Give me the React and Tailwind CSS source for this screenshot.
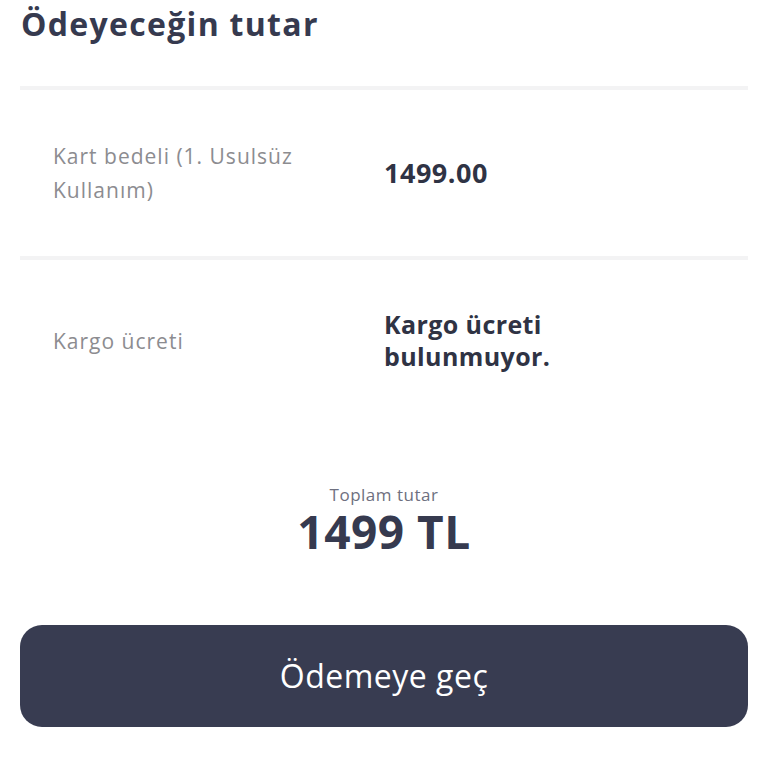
export default function App() {
  return (
    <div className="min-h-screen bg-white px-5 font-['Open_Sans',sans-serif] text-[#363a4f]">
      <h1 className="pt-[2px] pl-[1px] text-[32px] font-bold leading-[44px] tracking-[1.3px]">
        Ödeyeceğin tutar
      </h1>

      <div className="mt-[40px] h-[4px] bg-[#f3f3f4]" />

      <div className="grid h-[166px] grid-cols-2 items-center">
        <div className="pl-[33px] pr-6 text-[21px] leading-[34px] tracking-[1px] text-[#8c8c90]">
          Kart bedeli (1. Usulsüz Kullanım)
        </div>
        <div className="text-[27px] font-bold leading-[34px] tracking-[0.5px] text-[#2f3344]">
          1499.00
        </div>
      </div>

      <div className="h-[4px] bg-[#f3f3f4]" />

      <div className="grid h-[162px] grid-cols-2 items-center">
        <div className="pl-[33px] text-[21px] leading-[34px] tracking-[1px] text-[#8c8c90]">
          Kargo ücreti
        </div>
        <div className="-mt-[2px] text-[25px] font-bold leading-[32px] tracking-[0.4px] text-[#2f3344]">
          Kargo ücreti
          <br />
          bulunmuyor.
        </div>
      </div>

      <div className="mt-[62px] flex flex-col items-center">
        <div className="text-[17px] leading-[22px] tracking-[0.5px] text-[#6e7080]">Toplam tutar</div>
        <div className="text-[46px] font-bold leading-[50px] tracking-[0.5px]">1499 TL</div>
      </div>

      <button className="mt-[69px] flex h-[102px] w-full items-center justify-center rounded-[22px] bg-[#383c51] text-[32px] font-medium tracking-[0.5px] text-white">
        Ödemeye geç
      </button>
    </div>
  )
}
